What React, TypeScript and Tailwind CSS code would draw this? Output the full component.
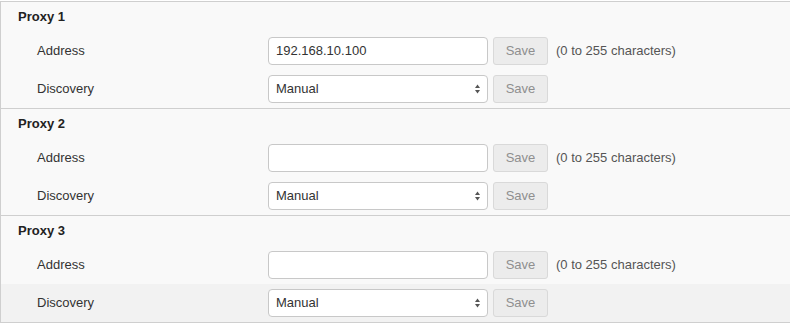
import React from "react";

function Arrows() {
  return (
    <svg width="7" height="11" viewBox="0 0 7 11" className="absolute right-[6px] top-1/2 -translate-y-1/2">
      <path d="M3.5 1 L6 4.5 L1 4.5 Z" fill="#555" />
      <path d="M3.5 10 L6 6.5 L1 6.5 Z" fill="#555" />
    </svg>
  );
}

function SaveBtn() {
  return (
    <div className="w-[55px] h-[28px] ml-[5px] flex items-center justify-center rounded-[3px] border border-[#d9d9d9] bg-[#ececec] text-[#8f8f8f] text-[13px]">
      Save
    </div>
  );
}

function AddressRow({ value }: { value: string }) {
  return (
    <div className="h-[38px] flex items-center pl-[36px]">
      <div className="w-[231px] text-[13px] text-[#333]">Address</div>
      <div className="w-[220px] h-[28px] rounded-[4px] border border-[#c8c8c8] bg-white flex items-center px-[7px] text-[13px] text-[#333]">
        {value}
      </div>
      <SaveBtn />
      <div className="ml-[8px] text-[13px] text-[#555]">(0 to 255 characters)</div>
    </div>
  );
}

function DiscoveryRow({ highlight }: { highlight?: boolean }) {
  return (
    <div className={"h-[38px] flex items-center pl-[36px] " + (highlight ? "bg-[#f2f2f2]" : "")}>
      <div className="w-[231px] text-[13px] text-[#333]">Discovery</div>
      <div className="relative w-[220px] h-[28px] rounded-[4px] border border-[#c8c8c8] bg-white flex items-center px-[7px] text-[13px] text-[#333]">
        Manual
        <Arrows />
      </div>
      <SaveBtn />
    </div>
  );
}

function Section({ title, value, highlight }: { title: string; value: string; highlight?: boolean }) {
  return (
    <div className="border-b border-[#cfcfcf]">
      <div className="h-[30px] flex items-center pl-[17px] text-[13px] font-bold text-[#222]">{title}</div>
      <AddressRow value={value} />
      <DiscoveryRow highlight={highlight} />
    </div>
  );
}

export default function App() {
  return (
    <div className="w-[790px] h-[324px] bg-white" style={{ fontFamily: '"Liberation Sans", Arial, sans-serif' }}>
      <div className="mt-[1px] border-t border-l border-[#cfcfcf] bg-[#f9f9f9]">
        <Section title="Proxy 1" value="192.168.10.100" />
        <Section title="Proxy 2" value="" />
        <Section title="Proxy 3" value="" highlight />
      </div>
    </div>
  );
}
